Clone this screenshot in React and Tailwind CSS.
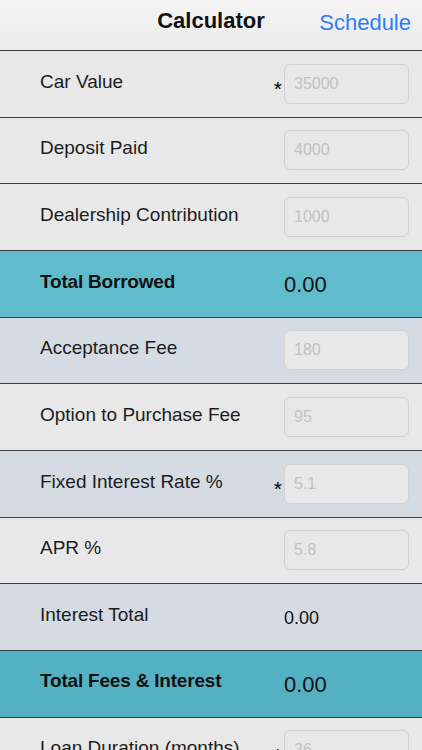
import React from 'react';

const rows = [
  { label: 'Car Value', value: '35000', required: true, kind: 'input', bg: 'bg-[#e8e8e8]' },
  { label: 'Deposit Paid', value: '4000', kind: 'input', bg: 'bg-[#e8e8e8]' },
  { label: 'Dealership Contribution', value: '1000', kind: 'input', bg: 'bg-[#e8e8e8]' },
  { label: 'Total Borrowed', value: '0.00', kind: 'total', bg: 'bg-[#60bccc]' },
  { label: 'Acceptance Fee', value: '180', kind: 'input', bg: 'bg-[#d5dbe3]' },
  { label: 'Option to Purchase Fee', value: '95', kind: 'input', bg: 'bg-[#e8e8e8]' },
  { label: 'Fixed Interest Rate %', value: '5.1', required: true, kind: 'input', bg: 'bg-[#d5dbe3]' },
  { label: 'APR %', value: '5.8', kind: 'input', bg: 'bg-[#e8e8e8]' },
  { label: 'Interest Total', value: '0.00', kind: 'result', bg: 'bg-[#d5dbe3]' },
  { label: 'Total Fees & Interest', value: '0.00', kind: 'total', bg: 'bg-[#54b1c3]' },
  { label: 'Loan Duration (months)', value: '36', required: true, kind: 'input', bg: 'bg-[#e8e8e8]' },
];

function Row({ row }) {
  return (
    <div className={`flex h-[66.67px] shrink-0 items-center border-t-[1.5px] border-[#3a3d40] ${row.bg}`}>
      <div
        className={`w-[233px] whitespace-nowrap pl-[40px] pb-[4px] text-[#1c1c1c] ${
          row.kind === 'total' ? 'text-[19px] font-bold tracking-[-0.2px] text-[#111]' : 'text-[19px]'
        }`}
      >
        {row.label}
      </div>
      <div className="flex w-[51px] justify-end pr-[2px] pt-[10px] text-[21px] leading-none text-black">
        {row.required ? '*' : ''}
      </div>
      {row.kind === 'input' && (
        <div className="flex h-[40px] w-[125px] items-center rounded-[6px] border border-[#d2d2d2] bg-[#e8e8e8] pl-[9px] text-[16px] text-[#c2c2c2]">
          {row.value}
        </div>
      )}
      {row.kind === 'total' && <div className="pt-[2px] text-[22px] text-[#111]">{row.value}</div>}
      {row.kind === 'result' && <div className="pt-[2px] text-[18px] text-[#111]">{row.value}</div>}
    </div>
  );
}

export default function App() {
  return (
    <div className="flex h-[750px] w-[422px] flex-col overflow-hidden bg-[#e8e8e8] font-['Liberation_Sans',Arial,sans-serif]">
      {/* Nav bar */}
      <div className="relative flex h-[50px] shrink-0 items-center justify-center bg-gradient-to-b from-[#f4f4f4] to-[#ececec] pb-[10px]">
        <span className="text-[22px] font-bold text-[#111]">Calculator</span>
        <span className="absolute right-[11px] top-[6px] text-[22px] text-[#2f7df6]">Schedule</span>
      </div>

      {rows.map((row) => (
        <Row key={row.label} row={row} />
      ))}
    </div>
  );
}
